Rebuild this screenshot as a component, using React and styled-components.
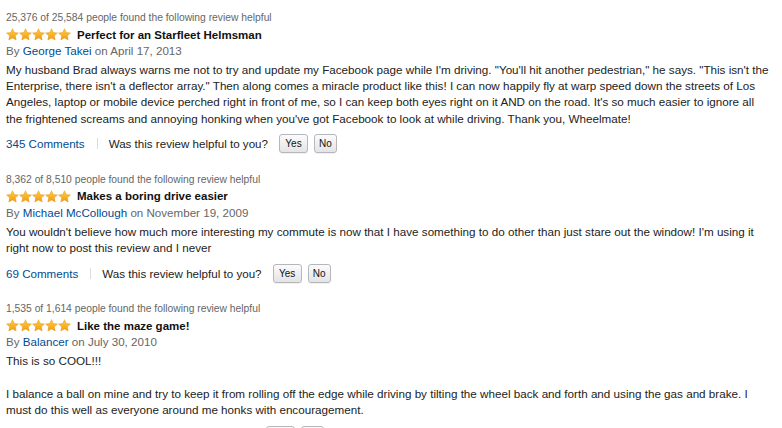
import React from 'react'
import styled, { createGlobalStyle } from 'styled-components'

const GlobalStyle = createGlobalStyle`
    html, body {
        margin: 0;
        padding: 0;
        background: #ffffff;
    }
    body {
        font-family: "Liberation Sans", Arial, sans-serif;
        color: #333333;
    }
`;

const PageDiv = styled.div`
    width: 776px;
    padding: 9px 0 0 6px;
`;

const ReviewDiv = styled.div`
    margin-bottom: 17px;
`;

const HelpfulSpan = styled.div`
    font-size: 10.3px;
    line-height: 17px;
    color: #666666;
`;

const TitleRow = styled.div`
    display: flex;
    align-items: center;
    gap: 6px;
    height: 17px;
`;

const StarsDiv = styled.div`
    display: flex;
`;

const TitleSpan = styled.span`
    font-size: 11.5px;
    font-weight: bold;
    color: #111111;
`;

const BylineDiv = styled.div`
    font-size: 11.6px;
    line-height: 16px;
    color: #666666;
`;

const AuthorLink = styled.a`
    color: #004b91;
    text-decoration: none;
`;

const BodyDiv = styled.div`
    margin-top: 3px;
    font-size: 11.67px;
    line-height: 16.2px;
    color: #222222;
    white-space: nowrap;
`;

const ActionsRow = styled.div`
    display: flex;
    align-items: center;
    height: 20px;
    margin-top: 7px;
    font-size: 11.6px;
`;

const CommentsLink = styled.a`
    color: #004b91;
    text-decoration: none;
`;

const Separator = styled.span`
    width: 1px;
    height: 11px;
    background: #dddddd;
    margin: 0 11px 0 12px;
`;

const QuestionSpan = styled.span`
    color: #222222;
    margin-right: 11px;
`;

const VoteButton = styled.button`
    font-family: "Liberation Sans", Arial, sans-serif;
    font-size: 10px;
    color: #111111;
    height: 19px;
    min-width: ${props => props.$wide ? '29px' : '23px'};
    padding: 0 4px;
    margin-right: 6px;
    border: 1px solid #b4b7bd;
    border-radius: 3px;
    background: linear-gradient(#fbfbfb, #e4e4e4);
    box-shadow: 0 1px 0 rgba(0, 0, 0, 0.06);
    cursor: pointer;
`;

function Star() {
    return (
        <svg width="13" height="13" viewBox="0 0 24 24">
            <defs>
                <linearGradient id="starGrad" x1="0" y1="0" x2="0" y2="1">
                    <stop offset="0" stopColor="#ffce3a" />
                    <stop offset="1" stopColor="#f39b14" />
                </linearGradient>
            </defs>
            <path
                d="M12 1.2l3.3 7.1 7.7.9-5.7 5.3 1.5 7.7L12 18.3l-6.8 3.9 1.5-7.7L1 9.2l7.7-.9z"
                fill="url(#starGrad)"
                stroke="#e0901a"
                strokeWidth="0.8"
            />
        </svg>
    );
}

const reviews = [
    {
        helpful: '25,376 of 25,584',
        title: 'Perfect for an Starfleet Helmsman',
        author: 'George Takei',
        date: 'April 17, 2013',
        body: [
            'My husband Brad always warns me not to try and update my Facebook page while I\'m driving. "You\'ll hit another pedestrian," he says. "This isn\'t the',
            'Enterprise, there isn\'t a deflector array." Then along comes a miracle product like this! I can now happily fly at warp speed down the streets of Los',
            'Angeles, laptop or mobile device perched right in front of me, so I can keep both eyes right on it AND on the road. It\'s so much easier to ignore all',
            'the frightened screams and annoying honking when you\'ve got Facebook to look at while driving. Thank you, Wheelmate!',
        ],
        comments: 345,
    },
    {
        helpful: '8,362 of 8,510',
        title: 'Makes a boring drive easier',
        author: 'Michael McCollough',
        date: 'November 19, 2009',
        body: [
            'You wouldn\'t believe how much more interesting my commute is now that I have something to do other than just stare out the window! I\'m using it',
            'right now to post this review and I never',
        ],
        comments: 69,
    },
    {
        helpful: '1,535 of 1,614',
        title: 'Like the maze game!',
        author: 'Balancer',
        date: 'July 30, 2010',
        body: [
            'This is so COOL!!!',
            '',
            'I balance a ball on mine and try to keep it from rolling off the edge while driving by tilting the wheel back and forth and using the gas and brake. I',
            'must do this well as everyone around me honks with encouragement.',
        ],
        comments: 9,
    },
];

function Review({ review }) {
    return (
        <ReviewDiv>
            <HelpfulSpan>{review.helpful} people found the following review helpful</HelpfulSpan>
            <TitleRow>
                <StarsDiv>
                    {[0, 1, 2, 3, 4].map(i => <Star key={i} />)}
                </StarsDiv>
                <TitleSpan>{review.title}</TitleSpan>
            </TitleRow>
            <BylineDiv>
                By <AuthorLink href="#">{review.author}</AuthorLink> on {review.date}
            </BylineDiv>
            <BodyDiv>
                {review.body.map((line, i) => (
                    <div key={i}>{line === '' ? '\u00a0' : line}</div>
                ))}
            </BodyDiv>
            <ActionsRow>
                <CommentsLink href="#">{review.comments} Comments</CommentsLink>
                <Separator />
                <QuestionSpan>Was this review helpful to you?</QuestionSpan>
                <VoteButton $wide>Yes</VoteButton>
                <VoteButton>No</VoteButton>
            </ActionsRow>
        </ReviewDiv>
    );
}

export default function App() {
    return (
        <>
            <GlobalStyle />
            <PageDiv>
                {reviews.map((r, i) => <Review key={i} review={r} />)}
            </PageDiv>
        </>
    );
}
